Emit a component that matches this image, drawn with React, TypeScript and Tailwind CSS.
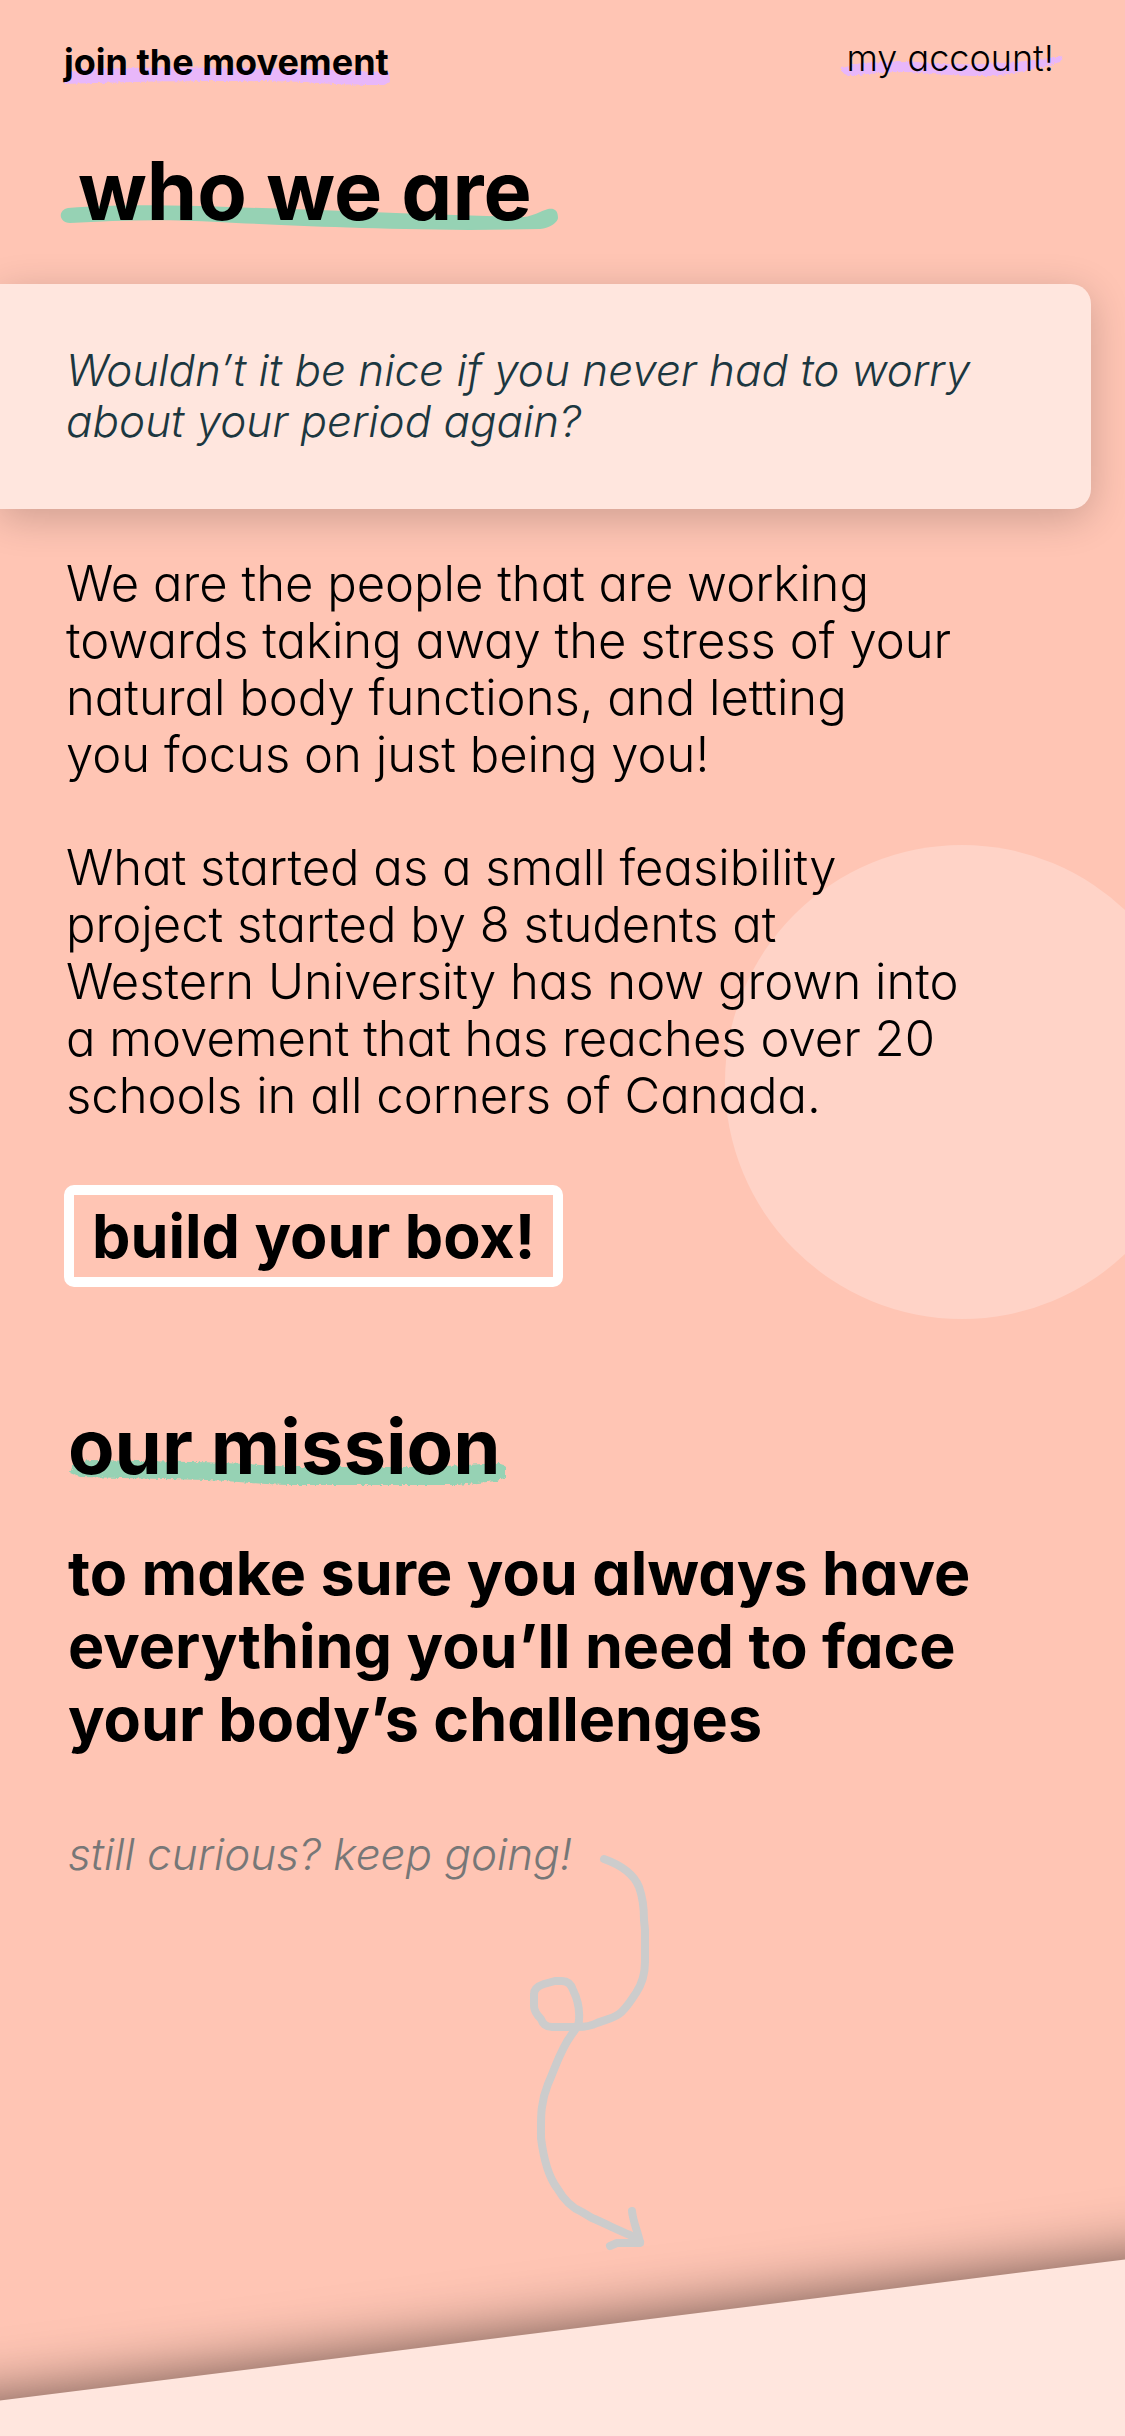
function RoughEdges() {
  return (
    <svg className="absolute size-0" aria-hidden="true">
      <filter id="rough" x="-5%" y="-20%" width="110%" height="140%">
        <feTurbulence type="fractalNoise" baseFrequency="0.35" numOctaves="2" seed="4" />
        <feDisplacementMap in="SourceGraphic" scale="4" />
      </filter>
    </svg>
  );
}

function Brush({ d, className, rough }: { d: string; className: string; rough?: boolean }) {
  return (
    <svg
      className={`absolute left-0 top-0 -z-10 h-full w-full overflow-visible ${className}`}
      fill="currentColor"
      aria-hidden="true"
    >
      <path d={d} filter={rough ? "url(#rough)" : undefined} />
    </svg>
  );
}

export default function App() {
  return (
    <div className="relative isolate flex min-h-screen flex-col overflow-hidden bg-[#ffc5b4] font-['Inter',sans-serif] text-black [font-feature-settings:'cv11']">
      <RoughEdges />
      <header className="flex items-start justify-between pt-[38px] pr-[71px] pl-16">
        <a href="#join" className="relative isolate mt-1 text-[36px] leading-[40px] font-bold">
          <Brush
            rough
            className="text-[#e8b7fa]"
            d="M2 31L18 27C100 25 200 25 270 28L325 30L326 40L320 43C300 43 280 43 240 40C160 38 90 39 30 41L0 42Z"
          />
          join the movement
        </a>
        <a href="#account" className="relative isolate text-[36px] leading-[40px] font-light">
          <Brush
            rough
            className="text-[#e8b7fa]"
            d="M-4 30L15 25L60 23C80 25 100 27 130 26C160 26 190 22 217 18L214 24C190 31 170 36 140 38C110 38 90 36 60 34C40 34 20 36 2 38L-4 34Z"
          />
          my account!
        </a>
      </header>

      <main>
        <h1 className="relative isolate mt-[60px] ml-[78px] w-fit text-[81px] leading-[98px] font-bold">
          <Brush
            className="text-[#96d2b4]"
            d="M-10 66C-20 68 -20 80 -8 81C40 78 90 77 140 80C200 83 280 87 391 88L462 87C472 86 480 80 480 76C480 68 476 66 470 67C462 69 456 74 446 75C350 73 250 68 150 65C100 63 40 62 -10 66Z"
          />
          who we are
        </h1>

        <blockquote className="mt-[44px] mr-[34px] rounded-r-[20px] bg-[#ffe6de] pt-[61px] pb-[62px] pl-[66px] text-[44px] leading-[51px] font-light text-[#1c3740] italic shadow-[0_9px_40px_rgba(0,0,0,0.2)]">
          Wouldn’t it be nice if you never had to worry
          <br />
          about your period again?
        </blockquote>

        <section className="relative isolate mt-[46px] pl-[66px] text-[49px] leading-[57px] font-light">
          <div className="absolute top-[290px] -right-[74px] -z-10 size-[474px] rounded-full bg-[#ffd3c7]" />
          <p>
            We are the people that are working
            <br />
            towards taking away the stress of your
            <br />
            natural body functions, and letting
            <br />
            you focus on just being you!
          </p>
          <p className="mt-[56px]">
            What started as a small feasibility
            <br />
            project started by 8 students at
            <br />
            Western University has now grown into
            <br />
            a movement that has reaches over 20
            <br />
            schools in all corners of Canada.
          </p>
        </section>

        <button
          type="button"
          className="mt-[61px] ml-16 block h-[102px] rounded-[10px] border-10 border-white px-[18px] text-[61px] leading-[80px] font-bold"
        >
          build your box!
        </button>

        <section className="mt-[110px] pl-[68px]">
          <h2 className="relative isolate w-fit text-[76px] leading-[98px] font-bold">
            <Brush
              rough
              className="text-[#96d2b4]"
              d="M6 65L2 76L12 80L139 83C178 85 198 88 222 88L389 88L429 84L438 80L438 70L432 66L398 68L352 70L232 70C198 69 158 65 122 65L22 63Z"
            />
            our mission
          </h2>
          <p className="mt-[42px] text-[61px] leading-[73px] font-bold">
            to make sure you always have
            <br />
            everything you’ll need to face
            <br />
            your body’s challenges
          </p>
          <p className="mt-[72px] text-[44px] leading-[52px] font-light text-[#777777] italic">
            still curious? keep going!
          </p>
          <svg
            className="-mt-[30px] ml-[452px] h-[410px] w-[136px]"
            viewBox="520 1850 136 410"
            fill="none"
            stroke="#cccccc"
            strokeWidth="8"
            strokeLinecap="round"
            strokeLinejoin="round"
            aria-hidden="true"
          >
            <path d="M604 1859C618 1864 633 1872 639 1887C643 1898 644 1910 644 1920L645 1930V1962C645 1974 642 1984 636 1993C631 2000 626 2009 619 2014C612 2019 604 2020 597 2023C591 2026 584 2027 578 2027H552C547 2027 543 2025 541 2019C537 2015 534 2010 534 2006V1994C534 1989 538 1986 544 1984L555 1981H562C568 1981 571 1984 573 1990C577 1998 580 2008 579 2020C579 2026 575 2030 572 2034C560 2050 556 2066 548 2084C540 2104 541 2118 541 2138C543 2154 548 2176 557 2188C564 2200 572 2208 582 2212L592 2218C606 2224 618 2230 630 2235L640 2242" />
            <path d="M632 2211C633 2222 638 2232 640 2243H617L610 2246" />
          </svg>
        </section>
      </main>

      <footer className="-mx-[100px] mt-[70px] -mb-[214px] h-[322px] origin-top -skew-y-[7.15deg] bg-[#ffe6de] shadow-[0_0_60px_rgba(0,0,0,0.6)]" />
    </div>
  );
}
